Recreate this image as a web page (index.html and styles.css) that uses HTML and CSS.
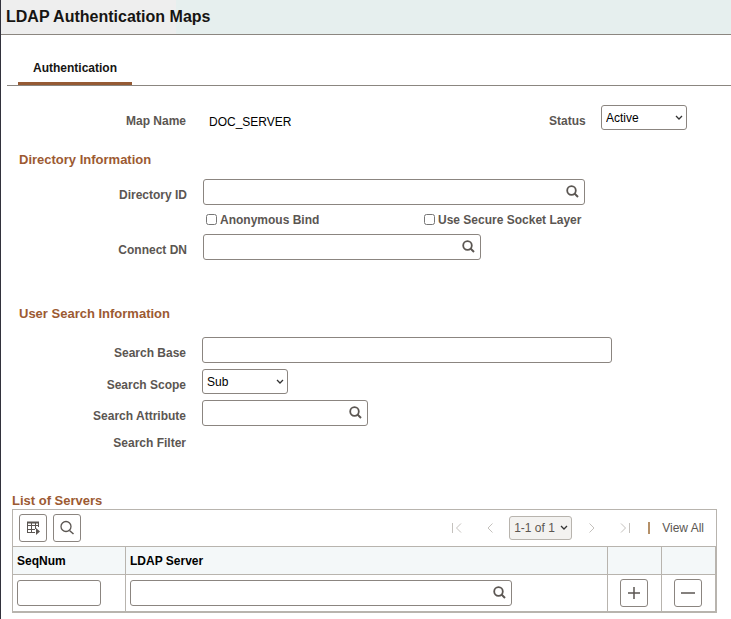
FILE: index.html
```html
<!doctype html>
<html lang="en">
<head>
<meta charset="UTF-8">
<title>LDAP Authentication Maps</title>
	<link rel="stylesheet" href="styles.css">
</head>

<body>
	<svg class="defs" aria-hidden="true">
		<symbol id="search" viewBox="0 0 13 13">
			<circle cx="5.5" cy="5.5" r="4.3" fill="none" stroke="currentColor" stroke-width="1.8"/>
			<path d="M8.5 8.5L12 12" stroke="currentColor" stroke-width="2"/>
		</symbol>
	</svg>

	<header class="banner">
		<h1>LDAP Authentication Maps</h1>
	</header>

	<nav class="tabs">
		<a class="tab" href="#authentication">Authentication</a>
	</nav>

	<form id="authentication">
		<div class="field map-row">
			<span class="label">Map Name</span>
			<span class="value">DOC_SERVER</span>
			<label class="status-label" for="status">Status</label>
			<select id="status">
				<option>Active</option>
				<option>Inactive</option>
			</select>
		</div>

		<section class="directory">
			<h2>Directory Information</h2>
			<div class="field">
				<label class="label" for="directoryId">Directory ID</label>
				<div class="lookup wide">
					<input type="text" id="directoryId">
					<button type="button" aria-label="Look up Directory ID"><svg><use href="#search"/></svg></button>
				</div>
			</div>
			<div class="checks">
				<label class="check"><input type="checkbox" name="anonymous">Anonymous Bind</label>
				<label class="check"><input type="checkbox" name="ssl">Use Secure Socket Layer</label>
			</div>
			<div class="field">
				<label class="label" for="connectDn">Connect DN</label>
				<div class="lookup medium">
					<input type="text" id="connectDn">
					<button type="button" aria-label="Look up Connect DN"><svg><use href="#search"/></svg></button>
				</div>
			</div>
		</section>

		<section class="user-search">
			<h2>User Search Information</h2>
			<div class="field">
				<label class="label" for="searchBase">Search Base</label>
				<input type="text" class="base" id="searchBase">
			</div>
			<div class="field">
				<label class="label" for="searchScope">Search Scope</label>
				<select id="searchScope">
					<option>Sub</option>
					<option>Base</option>
					<option>One</option>
				</select>
			</div>
			<div class="field">
				<label class="label" for="searchAttribute">Search Attribute</label>
				<div class="lookup short">
					<input type="text" id="searchAttribute">
					<button type="button" aria-label="Look up Search Attribute"><svg><use href="#search"/></svg></button>
				</div>
			</div>
			<div class="field">
				<span class="label">Search Filter</span>
			</div>
		</section>

		<section class="servers">
			<h2>List of Servers</h2>
			<div class="toolbar">
				<button type="button" class="tool" aria-label="Grid actions">
					<svg width="16" height="16" viewBox="0 0 16 16" fill="none" stroke="currentColor">
						<path d="M2 2.5h12M2 5.5h12M2 9.500h8M2 12.500h8M2.500 2v11M6.500 2v11M10.500 2v7M13.500 2v5"/>
						<path d="M2 2.500h12" stroke-width="2"/>
						<path d="M11 8l4 3.500-4 3.500z" fill="currentColor" stroke="none"/>
					</svg>
				</button>
				<button type="button" class="tool" aria-label="Find">
					<svg width="16" height="16" viewBox="0 0 16 16" fill="none" stroke="currentColor">
						<circle cx="7" cy="6.5" r="5" stroke-width="1.3"/>
						<path d="M10.5 10.5L14.5 14" stroke-width="1.5"/>
					</svg>
				</button>
				<div class="pager">
					<button type="button" disabled aria-label="First"><svg width="12" height="12" viewBox="0 0 12 12"><path d="M1.5 1v10M10 1.5L5.5 6l4.5 4.5"/></svg></button>
					<button type="button" disabled aria-label="Previous"><svg width="12" height="12" viewBox="0 0 12 12"><path d="M8.5 1.5L4 6l4.5 4.5"/></svg></button>
					<select class="range" aria-label="Rows" disabled>
						<option>1-1 of 1</option>
					</select>
					<button type="button" disabled aria-label="Next"><svg width="12" height="12" viewBox="0 0 12 12"><path d="M3.5 1.5L8 6l-4.5 4.5"/></svg></button>
					<button type="button" disabled aria-label="Last"><svg width="12" height="12" viewBox="0 0 12 12"><path d="M2 1.5L6.5 6 2 10.5M10.5 1v10"/></svg></button>
				</div>
				<span class="divider"></span>
				<a class="view-all" href="#all">View All</a>
			</div>
			<table>
				<thead>
					<tr>
						<th class="seq">SeqNum</th>
						<th>LDAP Server</th>
						<th class="action"></th>
						<th class="action"></th>
					</tr>
				</thead>
				<tbody>
					<tr>
						<td><input type="text" class="seq-input" aria-label="SeqNum"></td>
						<td>
							<div class="lookup wide">
								<input type="text" aria-label="LDAP Server">
								<button type="button" aria-label="Look up LDAP Server"><svg><use href="#search"/></svg></button>
							</div>
						</td>
						<td class="action"><button type="button" class="tool" aria-label="Add row"><svg width="14" height="14" viewBox="0 0 14 14" stroke="currentColor" stroke-width="1.5"><path d="M7 1v12M1 7h12"/></svg></button></td>
						<td class="action"><button type="button" class="tool" aria-label="Delete row"><svg width="14" height="14" viewBox="0 0 14 14" stroke="currentColor" stroke-width="1.5"><path d="M0 7h14"/></svg></button></td>
					</tr>
				</tbody>
			</table>
		</section>
	</form>
</body>
</html>
```

FILE: styles.css
```css
* {
	box-sizing: border-box;
}

body {
	margin: 0;
	min-height: 100vh;
	border-left: 1px solid #32323c;
	background-color: #fff;
	color: #000;
	font-family: "Liberation Sans", Arial, sans-serif;
	font-size: 12px;
}

.defs {
	display: none;
}

.banner {
	height: 35px;
	padding: 0 5px;
	border-bottom: 1px solid #8b8680;
	background: linear-gradient(to right, #eeeeee 175px, #e6efee 175px);
}

h1 {
	margin: 0;
	font-size: 16px;
	line-height: 34px;
	color: #161513;
}

h2 {
	margin: 0;
	font-size: 13px;
	line-height: 16px;
	color: #9c5a32;
}

.tabs {
	display: flex;
	margin-left: 6px;
	padding: 15px 11px 0;
	border-bottom: 1px solid #8b8680;
}

.tab {
	padding: 8px 15px;
	height: 35px;
	border-bottom: 3px solid #955a34;
	color: #161513;
	font-weight: bold;
	line-height: 20px;
	text-decoration: none;
}

.field {
	display: flex;
	align-items: center;
}

.label,
.status-label {
	color: #5b5652;
	font-weight: bold;
	line-height: 16px;
}

.label {
	width: 185px;
	margin-right: 16px;
	padding-top: 6px;
	text-align: right;
}

input,
select,
button {
	font-family: inherit;
	font-size: 12px;
}

input[type=text] {
	height: 26px;
	padding: 0 6px;
	border: 1px solid #8b8580;
	border-radius: 3px;
	background-color: #fff;
}

select {
	appearance: none;
	width: 86px;
	height: 25px;
	padding: 0 16px 0 4px;
	border: 1px solid #8b8580;
	border-radius: 3px;
	background: #fff url("data:image/svg+xml,%3Csvg xmlns='http://www.w3.org/2000/svg' width='8' height='6' fill='none' stroke='%23333' stroke-width='1.3'%3E%3Cpath d='M1 1l3 3 3-3'/%3E%3C/svg%3E") no-repeat right 3px center;
	color: #000;
}

/* text box with a search button at its right end */
.lookup {
	display: flex;
	position: relative;
}

.lookup input {
	width: 100%;
	padding-right: 26px;
}

.lookup button {
	position: absolute;
	top: 0;
	right: 0;
	width: 24px;
	height: 24px;
	padding: 5px;
	border: 0;
	background: none;
	color: #5b5652;
}

.lookup svg {
	display: block;
	width: 13px;
	height: 13px;
}

.wide {
	width: 382px;
}

.medium {
	width: 278px;
}

.short {
	width: 166px;
}

.base {
	width: 410px;
}

.map-row {
	padding-top: 19px;
}

.map-row .value {
	width: 339px;
	padding: 8px 7px 0;
}

.status-label {
	width: 60px;
	padding: 6px 0 0 8px;
}

.directory {
	padding: 22px 0 0 1px;
}

.directory h2,
.user-search h2 {
	padding-left: 18px;
}

.directory h2 {
	margin-left: -1px;
	margin-bottom: 11px;
}

.checks {
	display: grid;
	grid-template-columns: 218px auto;
	padding-left: 204px;
	height: 29px;
}

.check {
	display: flex;
	align-items: center;
	gap: 3px;
	color: #5b5652;
	font-weight: bold;
}

.check input {
	width: 11px;
	height: 11px;
	margin: 0;
}

.user-search {
	padding-top: 46px;
}

.user-search h2 {
	margin-bottom: 15px;
}

.user-search .field {
	margin-bottom: 6px;
}

.user-search .field:last-child {
	margin-top: -3px;
}

.servers {
	padding: 36px 14px 6px 11px;
}

.toolbar {
	display: flex;
	align-items: center;
	gap: 6px;
	height: 37px;
	padding: 0 12px 0 6px;
	border: 1px solid #b8b4ae;
	border-bottom: 0;
}

.tool {
	display: flex;
	align-items: center;
	justify-content: center;
	width: 28px;
	height: 28px;
	padding: 0;
	border: 1px solid #8b8580;
	border-radius: 3px;
	background-color: #fff;
	color: #5b5652;
}

.pager {
	display: flex;
	align-items: center;
	gap: 14px;
	margin-left: auto;
}

.pager button {
	display: flex;
	justify-content: center;
	width: 19px;
	padding: 0;
	border: 0;
	background: none;
}

.pager svg {
	fill: none;
	stroke: #c4c1bd;
}

.range {
	width: 63px;
	height: 24px;
	margin: 0 -4px;
	padding: 0 0 0 4px;
	border-color: #b8b4ae;
	background-color: #f3f2f0;
	color: #5b5652;
	opacity: 1;
}

.divider {
	width: 2px;
	height: 12px;
	margin-left: 8px;
	background-color: #b59068;
}

.view-all {
	margin-left: 6px;
	color: #5b5652;
	text-decoration: none;
}

table {
	width: 100%;
	table-layout: fixed;
	border: 1px solid #b8b4ae;
	border-width: 0 2px 2px 1px;
	border-collapse: separate;
	border-spacing: 0;
}

th,
td {
	padding: 0 4px;
	border-top: 1px solid #b8b4ae;
	border-left: 1px solid #b8b4ae;
	text-align: left;
}

th:first-child,
td:first-child {
	border-left: 0;
}

th {
	height: 28px;
	background-color: #f4f8f9;
}

td {
	height: 37px;
}

.seq {
	width: 112px;
}

.action {
	width: 54px;
	padding: 0 12px;
}

.seq-input {
	display: block;
	width: 84px;
}
```
